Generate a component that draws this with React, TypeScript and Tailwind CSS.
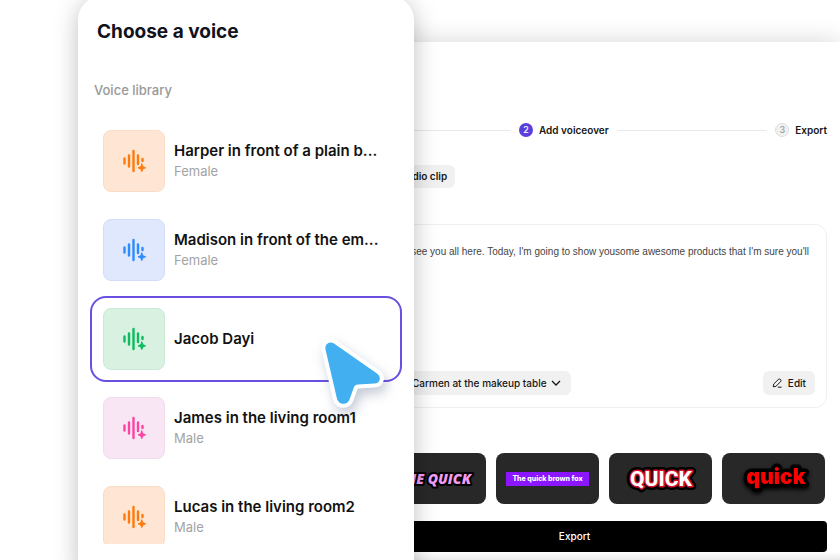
import { useState } from "react";

interface Voice {
  name: string;
  gender?: string;
  tile: string;
}

const voices: Voice[] = [
  { name: "Harper in front of a plain b...", gender: "Female", tile: "bg-[#ffe6d4] border-[#fbdcc6] text-[#ff7a0e]" },
  { name: "Madison in front of the em...", gender: "Female", tile: "bg-[#dfe8fc] border-[#d2def8] text-[#2f8cff]" },
  { name: "Jacob Dayi", tile: "bg-[#d9f1e1] border-[#cbe9d6] text-[#0cbc5f]" },
  { name: "James in the living room1", gender: "Male", tile: "bg-[#f9e6f4] border-[#f3dbec] text-[#fb45a2]" },
  { name: "Lucas in the living room2", gender: "Male", tile: "bg-[#ffe6d4] border-[#fbdcc6] text-[#ff7a0e]" },
];

function VoiceIcon() {
  return (
    <svg viewBox="0 0 24 24" className="size-6" fill="none" stroke="currentColor" strokeWidth="2.4" strokeLinecap="round">
      <path d="M2.5 9.5v5M7 6.5v11M11.5 2v20M16 6.5v8.5M20.500 10v2" />
      <path
        d="M19.800 15l1.100 2.700 2.700 1.100-2.700 1.100-1.100 2.700-1.100-2.700-2.700-1.100 2.700-1.100z"
        fill="currentColor"
        strokeWidth="1"
        strokeLinejoin="round"
      />
    </svg>
  );
}

function VoicePicker() {
  const [selected, setSelected] = useState("Jacob Dayi");

  return (
    <aside className="absolute -top-1 -bottom-6 left-[78px] w-2/5 rounded-3xl bg-white px-3 pt-6 shadow-[0_4px_24px_rgba(0,0,0,0.25)]">
      <h1 className="ml-[7px] text-[19px] leading-6 font-bold text-[#10121c]">Choose a voice</h1>
      <h2 className="mt-9 ml-1 text-[13px] leading-5 font-medium text-[#999]">Voice library</h2>
      <ul className="mt-[18px] flex h-[426px] flex-col gap-[3px] overflow-hidden">
        {voices.map((voice) => (
          <li key={voice.name} className="shrink-0">
            <button
              type="button"
              aria-pressed={voice.name === selected}
              onClick={() => setSelected(voice.name)}
              className={`flex h-[86px] w-full items-center gap-[9px] rounded-2xl border-2 px-[11px] text-left ${
                voice.name === selected ? "border-[#6a4fe0]" : "border-transparent"
              }`}
            >
              <span className={`flex size-[62px] shrink-0 items-center justify-center rounded-lg border ${voice.tile}`}>
                <VoiceIcon />
              </span>
              <span className="flex min-w-0 flex-col">
                <span className="text-[15px] leading-5 font-semibold whitespace-nowrap text-[#121212]">{voice.name}</span>
                {voice.gender && <span className="text-[13px] leading-5 text-[#a3a3a3]">{voice.gender}</span>}
              </span>
            </button>
          </li>
        ))}
      </ul>
      <svg
        viewBox="0 0 64 74"
        className="absolute top-[340px] left-[242px] h-[74px] w-16 overflow-visible drop-shadow-[3px_6px_6px_rgba(60,80,120,0.3)]"
      >
        <path
          d="M5.500 13.500C4.500 8 9.500 4.500 14 7.500L57 37.500C62 41 60 47.500 54.500 47.600L38 48.500C36 48.600 34.800 49.500 34 51L29.500 63.500C27.500 69.500 18.500 69.500 16.800 62Z"
          className="[paint-order:stroke]"
          fill="#42b0f0"
          stroke="#fff"
          strokeWidth="8"
          strokeLinejoin="round"
        />
      </svg>
    </aside>
  );
}

function Steps() {
  return (
    <ol className="flex items-center gap-2 text-[10px] leading-4 font-semibold text-[#161616]">
      <li className="h-px w-[189px] bg-[#e9e9e9]" />
      <li className="flex items-center gap-1.5">
        <span className="flex size-3.5 items-center justify-center rounded-full bg-[#5b3fdd] text-[9px] font-medium text-white">
          2
        </span>
        Add voiceover
      </li>
      <li className="h-px flex-1 bg-[#e9e9e9]" />
      <li className="flex items-center gap-1.5">
        <span className="flex size-3.5 items-center justify-center rounded-full border border-[#dedede] bg-[#f1f1f1] text-[9px] font-medium text-[#999]">
          3
        </span>
        Export
      </li>
    </ol>
  );
}

function CaptionStyles() {
  const card = "flex h-[51px] w-[103px] items-center justify-center rounded-lg bg-[#282828]";

  return (
    <div className="mr-0.5 flex justify-end gap-2.5">
      <button type="button" className={card}>
        <svg viewBox="0 0 100 30" className="h-[30px] w-[100px]">
          <text
            x="86"
            y="20"
            textAnchor="end"
            className="fill-[#f29cf5] stroke-black font-['Open_Sans',sans-serif] text-[14px] font-extrabold italic [paint-order:stroke]"
            strokeWidth="4"
            strokeLinejoin="round"
          >
            THE QUICK
          </text>
        </svg>
      </button>
      <button type="button" className={card}>
        <span className="bg-[#8b16ff] px-1.5 text-[7px] leading-[14px] font-extrabold text-white">The quick brown fox</span>
      </button>
      <button type="button" className={card}>
        <svg viewBox="0 0 80 36" className="h-9 w-20">
          <g
            textAnchor="middle"
            strokeLinejoin="round"
            className="font-[Roboto,sans-serif] text-[21px] font-extrabold [paint-order:stroke]"
          >
            <text x="40" y="25" className="fill-black stroke-black" strokeWidth="8" aria-hidden="true">QUICK</text>
            <text x="40" y="25" className="fill-white stroke-[#d3122a]" strokeWidth="3">QUICK</text>
          </g>
        </svg>
      </button>
      <button type="button" className={card}>
        <svg viewBox="0 0 80 36" className="h-9 w-20 drop-shadow-[0_2px_2px_#000]">
          <text
            x="42"
            y="23"
            textAnchor="middle"
            strokeWidth="7"
            strokeLinejoin="round"
            className="fill-[#ff0000] stroke-black text-[21px] font-black [paint-order:stroke]"
          >
            quick
          </text>
        </svg>
      </button>
    </div>
  );
}

function Editor() {
  return (
    <main className="mt-[42px] ml-[322px] flex flex-1 flex-col bg-white pr-[13px] shadow-[0_0_24px_rgba(0,0,0,0.16)]">
      <div className="pt-20">
        <Steps />
      </div>
      <button
        type="button"
        className="mt-[27px] ml-[61px] h-[23px] self-start rounded-md bg-[#f1f1f1] pr-2 pl-4 text-[10px] font-semibold text-[#161616]"
      >
        Audio clip
      </button>
      <section className="mt-9 flex h-[184px] flex-col justify-between rounded-xl border border-[#efefef] px-[11px] pb-3">
        <p className="mt-[19px] pr-1.5 text-right font-['Liberation_Sans',sans-serif] text-[10px] leading-4 whitespace-nowrap text-[#444]">
          see you all here. Today, I'm going to show yousome awesome products that I'm sure you'll
        </p>
        <div className="flex items-center justify-between text-[10px] font-medium text-[#161616]">
          <button type="button" className="ml-14 flex h-6 items-center gap-1 rounded-md bg-[#f1f1f1] pr-2.5 pl-[22px]">
            Carmen at the makeup table
            <svg viewBox="0 0 10 10" className="size-2.5" fill="none" stroke="currentColor" strokeWidth="1.300">
              <path d="M1 3l4 4 4-4" />
            </svg>
          </button>
          <button type="button" className="flex h-6 items-center gap-1.5 rounded-md bg-[#f1f1f1] px-[9px]">
            <svg viewBox="0 0 12 12" className="size-2.5" fill="none" stroke="currentColor" strokeWidth="1.200">
              <path d="M1.500 10.500l.5-3.200L7.500 1.800a1.800 1.800 0 0 1 2.700 2.700L4.700 10zM7 11h4.500" />
            </svg>
            Edit
          </button>
        </div>
      </section>
      <div className="mt-[45px]">
        <CaptionStyles />
      </div>
      <button type="button" className="mt-[17px] h-[31px] rounded bg-black text-[10px] font-medium text-white">
        Export
      </button>
      <div className="-mr-[13px] h-2 bg-gradient-to-b from-white to-[#ebebeb]" />
    </main>
  );
}

export default function App() {
  return (
    <div className="relative flex min-h-screen flex-col overflow-hidden bg-white font-[Inter,'Liberation_Sans',sans-serif]">
      <Editor />
      <VoicePicker />
    </div>
  );
}
